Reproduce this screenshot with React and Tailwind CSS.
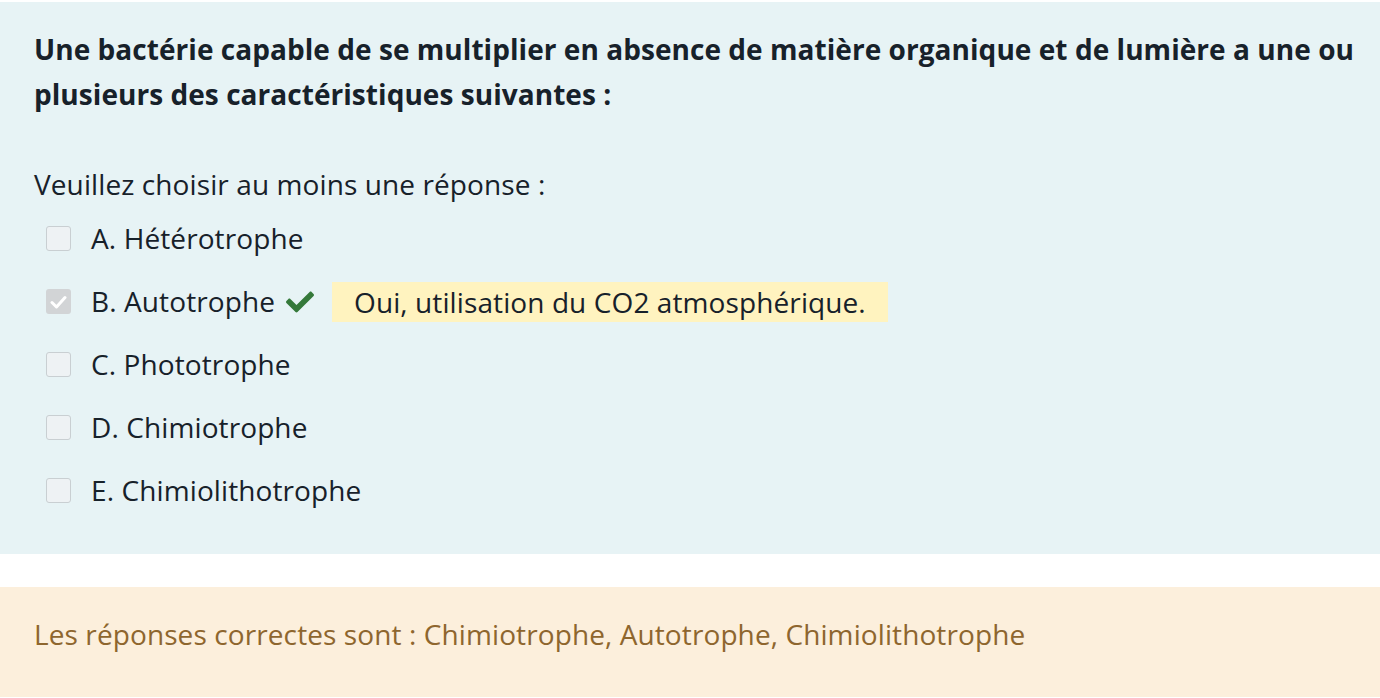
import React from "react";
import { FaCheck } from "react-icons/fa";

const options = [
  { key: "A", label: "Hétérotrophe" },
  { key: "B", label: "Autotrophe", checked: true, feedback: "Oui, utilisation du CO2 atmosphérique." },
  { key: "C", label: "Phototrophe" },
  { key: "D", label: "Chimiotrophe" },
  { key: "E", label: "Chimiolithotrophe" },
];

function Box({ checked }) {
  if (checked) {
    return (
      <span className="flex h-[25px] w-[25px] shrink-0 items-center justify-center rounded-[3px] bg-[#d2d4d6]">
        <svg width="17" height="14" viewBox="0 0 17 14">
          <path d="M2 7.5 L6.5 12 L15 2.5" fill="none" stroke="#ffffff" strokeWidth="3" strokeLinecap="round" strokeLinejoin="round" />
        </svg>
      </span>
    );
  }
  return <span className="h-[25px] w-[25px] shrink-0 rounded-[3px] border border-[#c9cfd2] bg-[#eef2f4]" />;
}

export default function App() {
  return (
    <div className="min-h-[698px] bg-white pt-[2px] text-[#17212a]" style={{ fontFamily: '"Open Sans", "Noto Sans", sans-serif' }}>
      <div className="bg-[#e7f3f5] pl-[34px] pr-[20px] pt-[25px] pb-[32px]">
        <p className="text-[28px] font-bold leading-[45px] tracking-[0.05px]">
          Une bactérie capable de se multiplier en absence de matière organique et de lumière a une ou plusieurs des caractéristiques suivantes :
        </p>
        <p className="mt-[45px] text-[28px] leading-[45px] tracking-[0.1px]">Veuillez choisir au moins une réponse :</p>
        <div className="flex flex-col">
          {options.map((o) => (
            <div key={o.key} className="flex h-[63px] items-center pl-[12px]">
              <Box checked={o.checked} />
              <span className="ml-[20px] text-[28px] leading-[45px] tracking-[0.1px]">
                {o.key}. {o.label}
              </span>
              {o.checked && (
                <>
                  <FaCheck className="ml-[11px] text-[#35793a]" size={28} />
                  <span className="ml-[18px] bg-[#fff3bf] px-[22px] text-[28px] leading-[40px] tracking-[0.1px]">{o.feedback}</span>
                </>
              )}
            </div>
          ))}
        </div>
      </div>
      <div className="mt-[33px] bg-[#fcefdc] px-[34px] pt-[25px] pb-[40px]">
        <p className="text-[28px] leading-[45px] tracking-[0.1px] text-[#8e662e]">
          Les réponses correctes sont : Chimiotrophe, Autotrophe, Chimiolithotrophe
        </p>
      </div>
    </div>
  );
}
